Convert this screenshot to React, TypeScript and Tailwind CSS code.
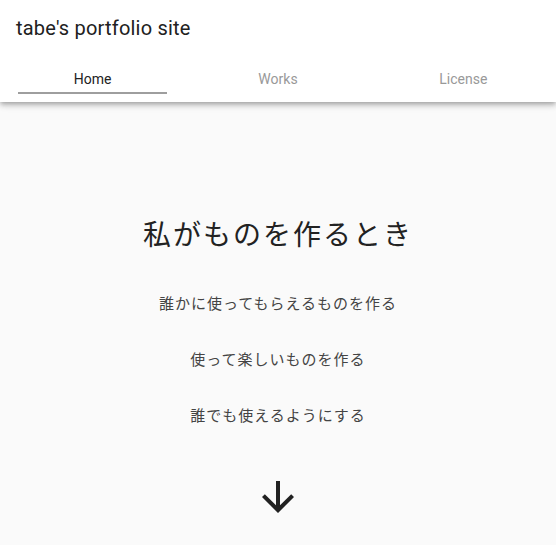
export default function App() {
  const tabs = ["Home", "Works", "License"];
  const lines = [
    "誰かに使ってもらえるものを作る",
    "使って楽しいものを作る",
    "誰でも使えるようにする",
  ];
  return (
    <div className="min-h-[545px] bg-[#fafafa] font-['Roboto','Noto_Sans_CJK_JP',sans-serif]">
      <header className="relative z-10 bg-white shadow-[0_2px_4px_-1px_rgba(0,0,0,0.2),0_4px_5px_0_rgba(0,0,0,0.14),0_1px_10px_0_rgba(0,0,0,0.12)]">
        <div className="h-[56px] flex items-center px-4">
          <h1 className="text-[20px] text-[#212121] tracking-[0.01em]">tabe's portfolio site</h1>
        </div>
        <nav className="grid grid-cols-3 h-[46px]">
          {tabs.map((t, i) => (
            <div key={t} className="relative flex items-center justify-center">
              <span className={"text-[14px] " + (i === 0 ? "text-[#222]" : "text-[#999]")}>{t}</span>
              {i === 0 && (
                <div className="absolute left-[18px] right-[18px] bottom-[8px] h-[2px] bg-[#9e9e9e]" />
              )}
            </div>
          ))}
        </nav>
      </header>
      <main className="flex flex-col items-center pt-[112px]">
        <h2 className="text-[28px] leading-[38px] tracking-[2px] text-[#222] font-['Noto_Sans_CJK_JP',sans-serif] font-normal">
          私がものを作るとき
        </h2>
        <div className="flex flex-col items-center gap-[34px] mt-[40px]">
          {lines.map((l) => (
            <p key={l} className="text-[15px] leading-[22px] tracking-[1px] text-[#444] font-['Noto_Sans_CJK_JP',sans-serif]">
              {l}
            </p>
          ))}
        </div>
        <svg className="mt-[47px] w-[48px] h-[48px]" viewBox="0 0 24 24" fill="#212121">
          <path d="M20 12l-1.41-1.41L13 16.17V4h-2v12.17l-5.58-5.59L4 12l8 8 8-8z" />
        </svg>
      </main>
    </div>
  );
}
